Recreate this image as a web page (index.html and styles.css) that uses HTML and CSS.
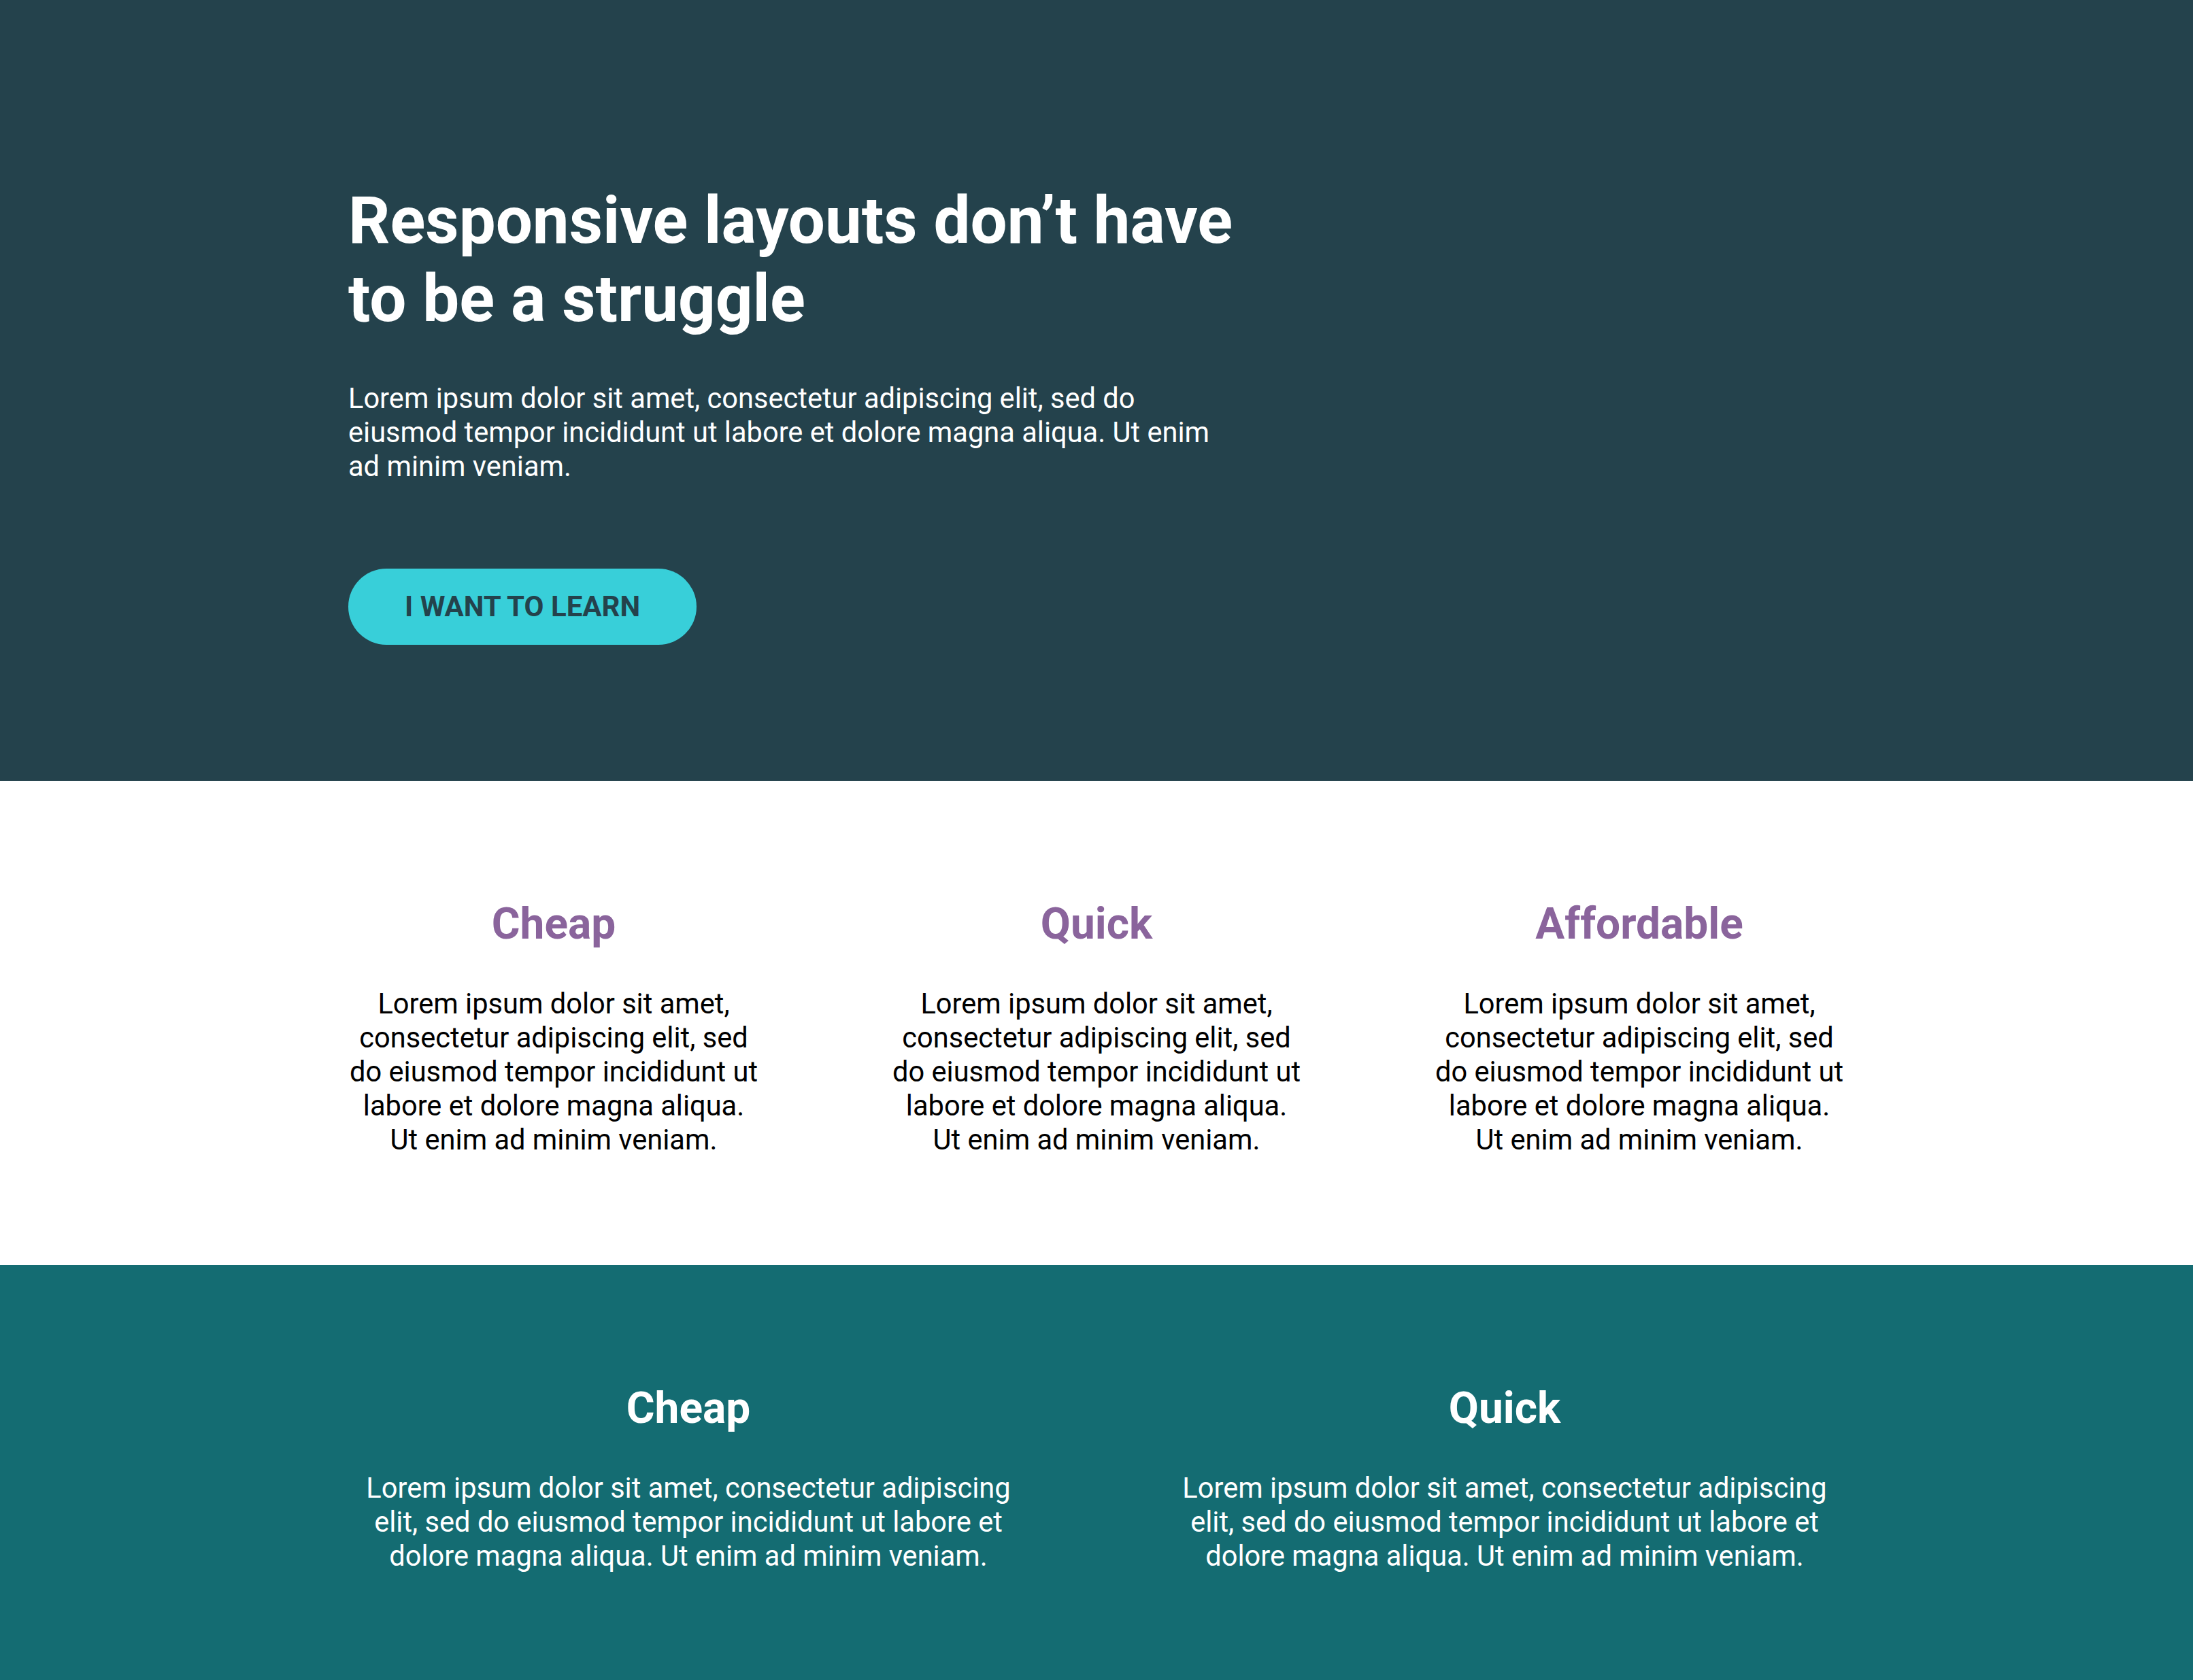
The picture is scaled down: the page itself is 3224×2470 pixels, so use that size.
FILE: index.html
```html
<!DOCTYPE html>
<html lang="en">
<head>
<meta charset="utf-8">
<title>Responsive layouts</title>
<link rel="stylesheet" href="styles.css">
</head>
<body>
<header class="hero">
  <div class="container">
    <div class="hero-text">
      <h1 class="hero-title">Responsive layouts don’t have to be a struggle</h1>
      <p class="hero-lead">Lorem ipsum dolor sit amet, consectetur adipiscing elit, sed do eiusmod tempor incididunt ut labore et dolore magna aliqua. Ut enim ad minim veniam.</p>
      <a class="btn" href="#">I want to learn</a>
    </div>
  </div>
</header>

<section class="features">
  <div class="container cols-3">
    <div class="col">
      <h2 class="col-title">Cheap</h2>
      <p class="col-text">Lorem ipsum dolor sit amet, consectetur adipiscing elit, sed do eiusmod tempor incididunt ut labore et dolore magna aliqua. Ut enim ad minim veniam.</p>
    </div>
    <div class="col">
      <h2 class="col-title">Quick</h2>
      <p class="col-text">Lorem ipsum dolor sit amet, consectetur adipiscing elit, sed do eiusmod tempor incididunt ut labore et dolore magna aliqua. Ut enim ad minim veniam.</p>
    </div>
    <div class="col">
      <h2 class="col-title">Affordable</h2>
      <p class="col-text">Lorem ipsum dolor sit amet, consectetur adipiscing elit, sed do eiusmod tempor incididunt ut labore et dolore magna aliqua. Ut enim ad minim veniam.</p>
    </div>
  </div>
</section>

<section class="features features-dark">
  <div class="container cols-2">
    <div class="col">
      <h2 class="col-title">Cheap</h2>
      <p class="col-text">Lorem ipsum dolor sit amet, consectetur adipiscing elit, sed do eiusmod tempor incididunt ut labore et dolore magna aliqua. Ut enim ad minim veniam.</p>
    </div>
    <div class="col">
      <h2 class="col-title">Quick</h2>
      <p class="col-text">Lorem ipsum dolor sit amet, consectetur adipiscing elit, sed do eiusmod tempor incididunt ut labore et dolore magna aliqua. Ut enim ad minim veniam.</p>
    </div>
  </div>
</section>
</body>
</html>
```

FILE: styles.css
```css
* {
  box-sizing: border-box;
}

html, body {
  margin: 0;
  padding: 0;
}

body {
  font-family: Roboto, "Liberation Sans", Arial, sans-serif;
  font-size: 41.6px;
  line-height: 1.2;
  color: #000;
  background: #fff;
}

.container {
  width: 2200px;
  margin: 0 auto;
}

/* Hero */
.hero {
  background: #24424c;
  color: #fff;
  padding: 203px 0 200px;
}

.hero-text {
  width: 1310px;
}

.hero-title {
  font-size: 96px;
  line-height: 1.2;
  font-weight: 700;
  margin: 64px 0;
}

.hero-lead {
  margin: 0;
}

.btn {
  display: inline-block;
  margin-top: 125px;
  padding: 31px 83px;
  border-radius: 56px;
  background: #38cfd9;
  color: #24424c;
  font-size: 42px;
  font-weight: 700;
  line-height: 50px;
  text-transform: uppercase;
  text-decoration: none;
}

/* Features */
.features {
  padding: 120px 0;
}

.cols-3 {
  display: grid;
  grid-template-columns: repeat(3, 1fr);
  column-gap: 194px;
}

.cols-2 {
  display: grid;
  grid-template-columns: repeat(2, 1fr);
  column-gap: 200px;
}

.col {
  text-align: center;
}

.col-title {
  font-size: 64px;
  line-height: 1.2;
  font-weight: 700;
  color: #8a649c;
  margin: 53px 0;
}

.col-text {
  margin: 0 0 40px;
}

.features-dark {
  background: #146c72;
  color: #fff;
}

.features-dark .col-title {
  color: #fff;
}
```
